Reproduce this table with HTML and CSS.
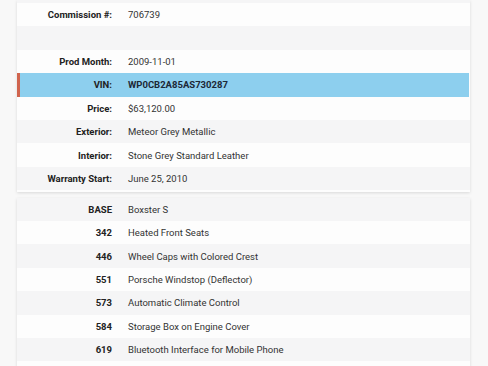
FILE: index.html
```html
<!DOCTYPE html>
<html>
<head>
<meta charset="utf-8">
<link rel="stylesheet" href="styles.css">
</head>
<body>
<div class="page">
  <section class="card card-top">
    <div class="row stub"></div>
    <div class="row"><div class="label">Commission #:</div><div class="value">706739</div></div>
    <div class="row"><div class="label"></div><div class="value"></div></div>
    <div class="row"><div class="label">Prod Month:</div><div class="value">2009-11-01</div></div>
    <div class="row vin"><div class="label">VIN:</div><div class="value">WP0CB2A85AS730287</div></div>
    <div class="row"><div class="label">Price:</div><div class="value">$63,120.00</div></div>
    <div class="row"><div class="label">Exterior:</div><div class="value">Meteor Grey Metallic</div></div>
    <div class="row"><div class="label">Interior:</div><div class="value">Stone Grey Standard Leather</div></div>
    <div class="row"><div class="label">Warranty Start:</div><div class="value">June 25, 2010</div></div>
  </section>
  <section class="card card-options">
    <div class="row"><div class="label">BASE</div><div class="value">Boxster S</div></div>
    <div class="row"><div class="label">342</div><div class="value">Heated Front Seats</div></div>
    <div class="row"><div class="label">446</div><div class="value">Wheel Caps with Colored Crest</div></div>
    <div class="row"><div class="label">551</div><div class="value">Porsche Windstop (Deflector)</div></div>
    <div class="row"><div class="label">573</div><div class="value">Automatic Climate Control</div></div>
    <div class="row"><div class="label">584</div><div class="value">Storage Box on Engine Cover</div></div>
    <div class="row"><div class="label">619</div><div class="value">Bluetooth Interface for Mobile Phone</div></div>
    <div class="row"><div class="label"></div><div class="value"></div></div>
  </section>
</div>
</body>
</html>
```
FILE: styles.css
```css
html, body {
  margin: 0;
  padding: 0;
  background: #f8f8f8;
  overflow: hidden;
}
body {
  font-family: Roboto, "Liberation Sans", sans-serif;
  font-size: 9.5px;
  color: #333;
}
.page {
  display: flex;
  flex-direction: column;
  gap: 6px;
  padding: 0 18px 0 17px;
}
.card {
  background: #fdfdfd;
  box-shadow: 0 1px 3px rgba(0, 0, 0, 0.13);
  display: flex;
  flex-direction: column;
}
.card-top {
  padding-bottom: 1.5px;
}
.row {
  display: grid;
  grid-template-columns: 95px 1fr;
  column-gap: 16px;
  align-items: center;
  height: 23.4px;
  background: #fdfdfd;
}
.card-top .row:nth-child(odd) {
  background: #f5f5f6;
}
.card-options .row:nth-child(odd) {
  background: #f5f5f6;
}
.row.stub {
  height: 3px;
}
.label {
  text-align: right;
  font-weight: 700;
  color: #222;
}
.value {
  white-space: nowrap;
}
.row.vin {
  background: #8dcfee !important;
  box-shadow: inset 3px 0 0 #d0644e;
  margin-right: 1px;
}
.row.vin .value {
  font-weight: 700;
  color: #1c2836;
}
```
